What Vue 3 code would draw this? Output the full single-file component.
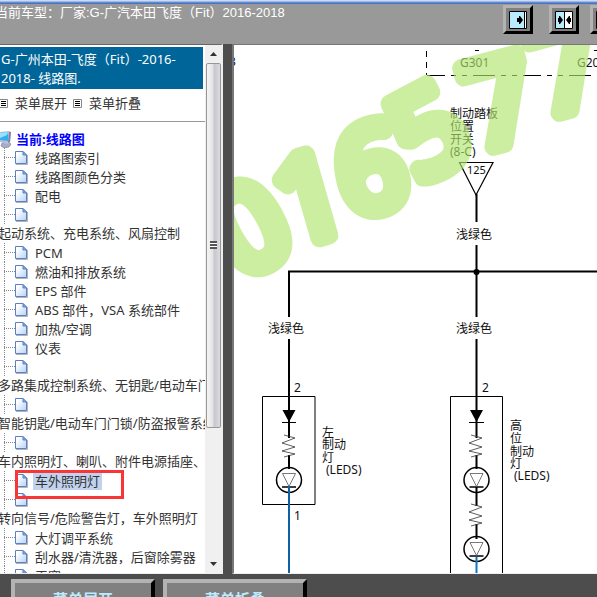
<script setup>
const rows = [
  { label: '线路图索引' },
  { label: '线路图颜色分类' },
  { label: '配电' },
  { wrapped: '起动系统、充电系统、风扇控制' },
  { label: 'PCM' },
  { label: '燃油和排放系统' },
  { label: 'EPS 部件' },
  { label: 'ABS 部件，VSA 系统部件' },
  { label: '加热/空调' },
  { label: '仪表' },
  { wrapped: '多路集成控制系统、无钥匙/电动车门' },
  { wrapped: '智能钥匙/电动车门门锁/防盗报警系统' },
  { wrapped: '车内照明灯、喇叭、附件电源插座、' },
  { label: '车外照明灯', current: true },
  { wrapped: '转向信号/危险警告灯，车外照明灯' },
  { label: '大灯调平系统' },
  { label: '刮水器/清洗器，后窗除雾器' },
  { label: '天窗' }
]
const watermark = [
  { digit: '0', x: 240, y: 280, turn: -29 },
  { digit: '1', x: 289, y: 247, turn: -16 },
  { digit: '6', x: 347, y: 217, turn: -13 },
  { digit: '5', x: 418, y: 184, turn: -28 },
  { digit: '7', x: 478, y: 151, turn: -15 },
  { digit: '7', x: 544, y: 117, turn: -15 }
]
const resistor = 'l11 3 l-13 5 l13 4 l-13 4 l13 3 l-11 3'
</script>

<template>
  <div class="app">
    <div class="strip"></div>
    <header class="header">
      <p class="model">当前车型：厂家:G-广汽本田飞度（Fit）2016-2018</p>
      <div class="tools">
        <button class="tool" type="button" aria-label="展开左栏">
          <svg width="18" height="18" viewBox="0 0 18 18">
            <path d="M.5.5h17v17H.5z" fill="#fff" stroke="#000" />
            <path d="M1 1h14v16H1z" fill="#b9ecff" />
            <path d="M15.500 1v16" stroke="#000" />
            <path d="M8 7h2V5h1l3 4-3 4h-1v-2H8z" fill="#000" />
          </svg>
        </button>
        <div class="pair">
          <button class="tool" type="button" aria-label="居中分栏">
            <svg width="18" height="18" viewBox="0 0 18 18">
              <path d="M.5.5h17v17H.5z" fill="#fff" stroke="#000" />
              <path d="M1 1h8v16H1z" fill="#b9ecff" />
              <path d="M9.500 1v16" stroke="#000" />
              <path d="M3 7h1V5h1l3 4-3 4H4v-2H3zM16 7h-1V5h-1l-3 4 3 4h1v-2h1z" fill="#000" />
            </svg>
          </button>
          <button class="tool" type="button" aria-label="展开右栏">
            <svg width="18" height="18" viewBox="0 0 18 18">
              <path d="M.5.5h17v17H.5z" fill="#b9ecff" stroke="#000" />
            </svg>
          </button>
        </div>
      </div>
    </header>

    <main class="frames">
      <aside class="side">
        <div class="content">
          <h1 class="title">G-广州本田-飞度（Fit）-2016-2018- 线路图.</h1>
          <div class="actions">
            <a v-for="name in ['菜单展开', '菜单折叠']" :key="name" class="action" href="#">
              <svg width="9" height="9" viewBox="0 0 9 9">
                <path d="M.5.5h8v8h-8z" fill="#fff" stroke="#888" />
                <path d="M2 2.500h5M2 4.500h5M2 6.500h5" stroke="#000" />
              </svg>
              {{ name }}
            </a>
          </div>
          <div class="root">
            <svg width="12" height="18" viewBox="0 0 12 18">
              <path d="M2 13l6-1 3 2-2 3-5 1-3-2z" fill="#a9adc4" stroke="#72779b" stroke-width=".6" />
              <path d="M0 2l9-1 2 1-1 11-3 1-7-2z" fill="#b8bfd5" />
              <path d="M0 3l8-1v9l-8-1z" fill="#35aef0" />
              <path d="M0 3l8-1-1 3-7 3z" fill="#9be0ff" />
              <path d="M9 2l2 0-1 10-2 1z" fill="#7d85a8" />
            </svg>
            <a class="root-link" href="#">当前:线路图</a>
          </div>
          <ul class="tree">
            <li v-for="(row, i) in rows" :key="i">
              <div class="node">
                <span class="branch"></span>
                <svg class="page" width="13" height="15" viewBox="0 0 13 15">
                  <defs>
                    <linearGradient :id="'pg' + i" x1="0" y1="0" x2="1" y2="1">
                      <stop offset=".2" stop-color="#fff" />
                      <stop offset="1" stop-color="#b4d3fa" />
                    </linearGradient>
                  </defs>
                  <path d="M1 14.500h11.500V5" fill="none" stroke="#b4b4b4" />
                  <path d="M.5 1.500h7.500l3.500 3.500v8.500H.5z" :fill="`url(#pg${i})`" stroke="#5a7fc4" />
                  <path d="M8 1.500v3.500h3.500z" fill="#8fafe0" stroke="#5a7fc4" />
                </svg>
                <a v-if="row.label" href="#" :class="['label', { current: row.current }]">{{ row.label }}</a>
                <span v-if="row.current" class="marker"></span>
              </div>
              <a v-if="row.wrapped" class="wrapped" href="#">{{ row.wrapped }}</a>
            </li>
          </ul>
        </div>
        <div class="scroll">
          <svg class="arrow" width="7" height="4" viewBox="0 0 7 4"><path d="M0 4L3.500 0 7 4z" fill="#333" /></svg>
          <div class="thumb"><span class="grip"></span></div>
          <svg class="arrow" width="7" height="4" viewBox="0 0 7 4"><path d="M0 0h7L3.500 4z" fill="#333" /></svg>
        </div>
      </aside>

      <section class="sheet">
        <svg class="diagram" width="100%" height="100%" role="img" aria-label="制动灯线路图">
          <g transform="translate(-234 -45)">
            <text x="229" y="66">3</text>
            <g fill="none" stroke="#000">
              <path d="M426.500 51v24" stroke-dasharray="6 5" />
              <path d="M427 75.500h170" stroke-dasharray="18 6 5 6 5 6 22 6 5 6 5 6" />
              <path d="M475 50.500h4M594 50.500h3" />
              <path d="M459.500 162.500h33.500l-17 32.500z" stroke-width="1.200" />
              <path d="M476.500 194v28M476.500 245v72M289 317V271.500H597M476.500 339v99M289 339v99" stroke-width="2" />
              <path d="M289 455v14M476.500 455v14M476.500 487v19M476.500 524v15" stroke-width="2" />
              <path d="M262.500 396.500h52.500v108h-52.500zM450.500 574V396.500h52V574" />
              <path d="M282 422.500h14M469 422.500h15" />
              <g stroke-width=".8" stroke="#333">
                <path :d="'M284 435' + resistor" />
                <path :d="'M471 435' + resistor" />
                <path :d="'M471 504' + resistor" />
              </g>
              <g stroke-width="1.500">
                <circle cx="289" cy="480" r="12.500" />
                <circle cx="476.500" cy="480" r="12.500" />
                <circle cx="476.500" cy="549" r="12.500" />
                <path d="M282 487h14M469.500 487h14M469.500 556h14" />
              </g>
              <path d="M282.500 473.500h13l-6.500 13zM470 473.500h13l-6.500 13zM470 542.500h13l-6.500 13z" stroke="#555" fill="#fff" stroke-width=".8" />
              <path d="M289 486v88" stroke="#0d61a6" stroke-width="2" />
              <path d="M476.500 557v17" stroke="#0876cb" stroke-width="2" />
            </g>
            <path d="M282.500 410h13l-6.500 12zM470 410h13l-6.500 12z" />
            <circle cx="476.500" cy="272" r="3" />
            <g>
              <text x="460" y="67">G301</text>
              <text x="577" y="67">G203</text>
              <text x="450" y="118">制动踏板</text>
              <text x="450" y="131">位置</text>
              <text x="450" y="144">开关</text>
              <text x="450" y="156">(8-C)</text>
              <text x="467" y="174" class="small">125</text>
              <text x="456" y="239">浅绿色</text>
              <text x="268" y="333">浅绿色</text>
              <text x="456" y="333">浅绿色</text>
              <text x="294" y="392">2</text>
              <text x="482" y="392">2</text>
              <text x="294" y="520">1</text>
              <text x="322" y="437">左</text>
              <text x="322" y="449">制动</text>
              <text x="322" y="462">灯</text>
              <text x="326" y="474">(LEDS)</text>
              <text x="510" y="430">高</text>
              <text x="510" y="443">位</text>
              <text x="510" y="456">制动</text>
              <text x="510" y="468">灯</text>
              <text x="514" y="480">(LEDS)</text>
            </g>
            <g class="watermark">
              <text v-for="(d, i) in watermark" :key="i" :transform="`translate(${d.x} ${d.y}) rotate(${d.turn})`">{{ d.digit }}</text>
            </g>
          </g>
        </svg>
      </section>
    </main>

    <footer class="footer">
      <button class="wide" type="button">菜单展开</button>
      <button class="wide" type="button">菜单折叠</button>
    </footer>
  </div>
</template>

<style>
body {
  overflow: hidden;
  background: #4d4d4d;
}
</style>

<style scoped>
.app {
  display: flex;
  flex-direction: column;
  height: 100vh;
  overflow: hidden;
  background: #4d4d4d;
  color: #333;
  font-family: "Noto Sans", "Noto Sans CJK SC", sans-serif;
  font-size: 13px;
  line-height: 19px;
}
a {
  color: inherit;
  text-decoration: none;
}
svg {
  flex: none;
  display: block;
}
.strip {
  flex: none;
  height: 4px;
  background: linear-gradient(#cddcf0 0 1px, #7096dc 2px, #3b66bd);
}
.header {
  flex: none;
  display: flex;
  justify-content: space-between;
  height: 40px;
  background: #999;
  overflow: hidden;
}
.model {
  margin: 0 0 0 -5px;
  color: #fff;
  font-family: "Liberation Sans", "Noto Sans CJK SC", sans-serif;
  line-height: 18px;
  white-space: nowrap;
}
.tools {
  flex: none;
  display: flex;
  gap: 16px;
  width: 94px;
  padding-top: 1px;
}
.pair {
  display: flex;
  gap: 11px;
}
.tool {
  flex: none;
  display: grid;
  place-items: center;
  width: 30px;
  height: 29px;
  padding: 0;
  background: #808080;
  border: 3px solid;
  border-color: #b3b3b3 #000 #000 #b3b3b3;
}
.frames {
  flex: 1;
  min-height: 0;
  display: grid;
  grid-template-columns: 223px 1fr;
  grid-template-rows: 100%;
  gap: 9px;
}
.side {
  display: flex;
  min-height: 0;
  box-sizing: border-box;
  background: #fff;
  border-top: 1px solid #666;
  border-right: 2px solid #eee;
  border-bottom: 1px solid #eee;
}
.content {
  flex: 1;
  min-width: 0;
  padding-top: 2px;
  overflow: hidden;
}
.title {
  margin: 0 2px 0 0;
  padding: 3px 1px 1px;
  background: #006699;
  color: #fff;
  font-size: 13px;
  font-weight: 400;
  line-height: 19px;
}
.actions {
  display: flex;
  gap: 6px;
  padding: 5px 0 8px;
  border-bottom: 1px solid #999;
  white-space: nowrap;
}
.action {
  display: flex;
  align-items: center;
  gap: 7px;
}
.action:first-child {
  margin-left: -1px;
}
.root {
  display: flex;
  align-items: center;
  gap: 4px;
  height: 18px;
  margin-top: 8px;
}
.root-link {
  color: #00f;
  font-weight: 700;
}
.tree {
  margin: 0;
  padding: 0;
  list-style: none;
}
.node {
  position: relative;
  display: flex;
  align-items: center;
  height: 19px;
  margin-left: 4px;
  background: repeating-linear-gradient(#888 0 1px, transparent 1px 2px) left / 1px 100% no-repeat;
}
.branch {
  width: 11px;
  height: 1px;
  background: repeating-linear-gradient(90deg, #888 0 1px, transparent 1px 2px);
}
.label {
  margin-left: 5px;
  padding: 0 2px;
  line-height: 18px;
  white-space: nowrap;
}
.current {
  background: #c1d2ee;
}
.marker {
  position: absolute;
  top: -1px;
  left: 11px;
  box-sizing: border-box;
  width: 109px;
  height: 29px;
  border: 3px solid #fa3538;
  z-index: 1;
}
.wrapped {
  display: block;
  margin-left: -2px;
  white-space: nowrap;
}
.scroll {
  flex: none;
  display: flex;
  flex-direction: column;
  align-items: center;
  width: 16px;
  padding: 7px 0;
  background: #f0f0f0;
  box-sizing: border-box;
}
.thumb {
  display: grid;
  place-items: center;
  flex: none;
  box-sizing: border-box;
  width: 15px;
  height: 71%;
  margin: 7px 0 auto;
  border: 1px solid #979797;
  border-radius: 2px;
  background: linear-gradient(90deg, #f5f5f5, #e2e2e6 48%, #c5c5ca 52%, #dcdce0);
}
.grip {
  width: 7px;
  height: 8px;
  background: repeating-linear-gradient(#555 0 2px, #fff 2px 3px);
}
.sheet {
  min-width: 0;
  overflow: hidden;
  background: #fff;
  border: solid #777;
  border-width: 1px 0 0 2px;
  border-bottom: 1px solid #eee;
}
.diagram text {
  font-size: 12px;
  fill: #111;
}
.diagram .small {
  font-size: 11px;
}
.watermark {
  opacity: 0.65;
}
.diagram .watermark text {
  fill: #b0e56f;
  stroke: #b0e56f;
  stroke-width: 18px;
  stroke-linejoin: round;
  font-size: 118px;
}
.footer {
  flex: none;
  display: flex;
  gap: 8px;
  height: 18px;
  padding: 5px 0 0 11px;
  overflow: hidden;
}
.wide {
  flex: none;
  width: 144px;
  height: 40px;
  padding: 0;
  background: #808080;
  border: 4px solid;
  border-color: #b3b3b3 #000 #000 #b3b3b3;
  color: #b9ecff;
  font: 700 15px/24px "Noto Sans CJK SC", sans-serif;
}
</style>
